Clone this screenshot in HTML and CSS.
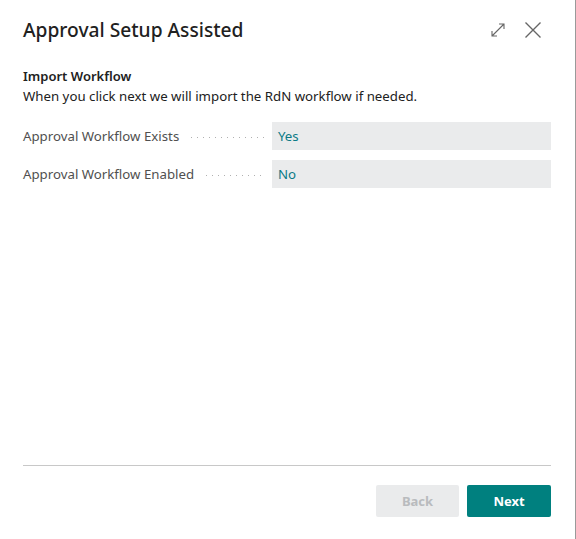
FILE: index.html
```html
<!DOCTYPE html>
<html lang="en">
<head>
  <meta charset="UTF-8">
  <title>Approval Setup Assisted</title>
  <link rel="stylesheet" href="styles.css">
</head>
<body>
  <div class="dialog">
    <!-- title bar -->
    <header class="dialog-header">
      <h1>Approval Setup Assisted</h1>
      <div class="header-actions">
        <button class="icon-btn" title="Expand">
          <svg width="16" height="16" viewBox="0 0 16 16" fill="none" stroke="#666" stroke-width="1.1">
            <path d="M2 14L14 2M9 2h5v5M2 9v5h5"/>
          </svg>
        </button>
        <button class="icon-btn" title="Close">
          <svg width="18" height="18" viewBox="0 0 18 18" fill="none" stroke="#666" stroke-width="1.4">
            <path d="M1.5 1.5l15 15M16.5 1.5l-15 15"/>
          </svg>
        </button>
      </div>
    </header>

    <!-- step content -->
    <main class="dialog-body">
      <h2>Import Workflow</h2>
      <p class="description">When you click next we will import the RdN workflow if needed.</p>

      <div class="field">
        <div class="field-label"><span>Approval Workflow Exists</span><i class="leader"></i></div>
        <div class="field-value">Yes</div>
      </div>
      <div class="field">
        <div class="field-label"><span>Approval Workflow Enabled</span><i class="leader"></i></div>
        <div class="field-value">No</div>
      </div>
    </main>

    <!-- navigation -->
    <footer class="dialog-footer">
      <button class="btn btn-back" disabled>Back</button>
      <button class="btn btn-next">Next</button>
    </footer>
  </div>
</body>
</html>
```

FILE: styles.css
```css
/* base */
body {
  margin: 0;
  font-family: "Noto Sans", "Open Sans", sans-serif;
  color: #212121;
  background: #fff;
}

.dialog {
  height: 539px;
  box-sizing: border-box;
  display: flex;
  flex-direction: column;
  padding: 0 24px 0 23px;
  border-right: 1px solid #9a9a9a;
}

/* header */
.dialog-header {
  display: flex;
  justify-content: space-between;
  align-items: center;
  padding-top: 16px;
}

.dialog-header h1 {
  margin: 0;
  font-size: 19.2px;
  line-height: 28px;
  font-weight: 500;
  color: #212121;
}

.header-actions {
  display: flex;
  align-items: center;
  gap: 18px;
  margin-right: 9px;
}

.icon-btn {
  border: none;
  background: none;
  padding: 0;
  display: flex;
  cursor: pointer;
}

/* body */
.dialog-body {
  flex: 1;
  padding-top: 22px;
}

.dialog-body h2 {
  margin: 0;
  font-size: 13px;
  line-height: 20px;
  font-weight: 600;
}

.description {
  margin: 0 0 16px;
  font-size: 13.25px;
  line-height: 20px;
}

.field {
  display: flex;
  height: 28px;
  margin-bottom: 10px;
  font-size: 13.25px;
}

.field-label {
  width: 249px;
  display: flex;
  align-items: center;
  color: #505050;
}

.leader {
  flex: 1;
  height: 2px;
  margin: 2px 7px 0 12px;
  background-image: linear-gradient(to right, #b0b0b0 1px, transparent 1px);
  background-size: 6px 1px;
  background-repeat: repeat-x;
  background-position: left center;
}

.field-value {
  flex: 1;
  background: #eaebec;
  color: #0b7a86;
  display: flex;
  align-items: center;
  padding-left: 6px;
}

/* footer */
.dialog-footer {
  border-top: 1px solid #c8c8c8;
  display: flex;
  justify-content: flex-end;
  gap: 8px;
  padding: 19px 0 22px;
}

.btn {
  width: 84px;
  height: 32px;
  border: none;
  border-radius: 2px;
  font-family: inherit;
  font-size: 13px;
  font-weight: 700;
}

.btn-back {
  background: #eaebec;
  color: #b9bbbe;
  width: 83px;
}

.btn-next {
  background: #00807f;
  color: #fff;
}
```
